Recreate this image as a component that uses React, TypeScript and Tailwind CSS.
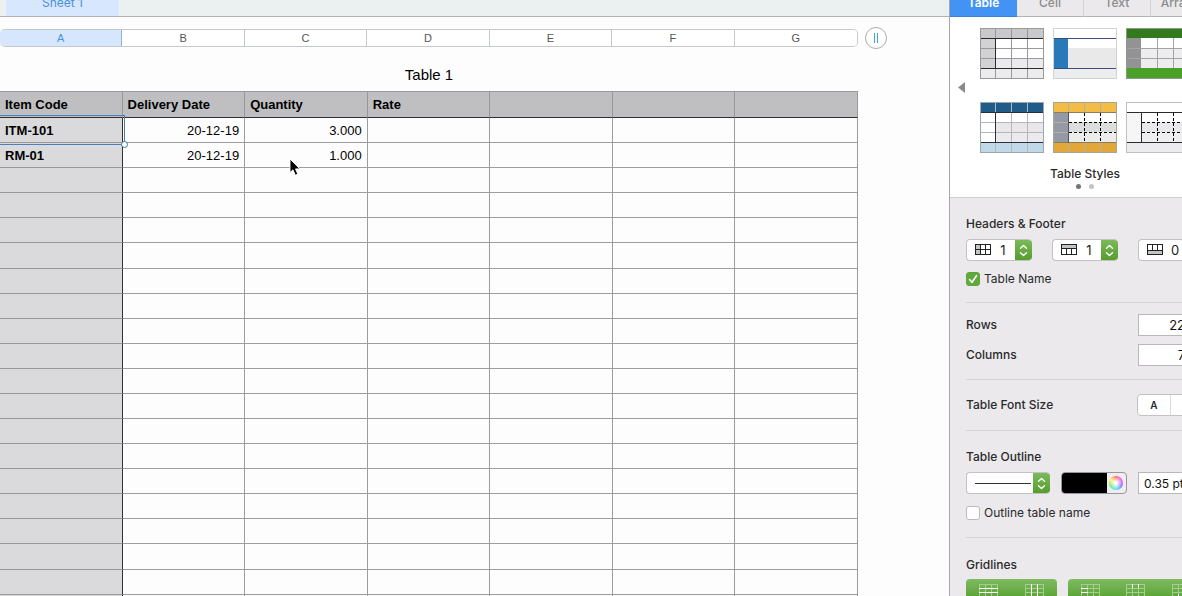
import type { ReactNode } from "react";

const columns = ["A", "B", "C", "D", "E", "F", "G"];
const headers = ["Item Code", "Delivery Date", "Quantity", "Rate", "", "", ""];
const tabs = ["Table", "Cell", "Text", "Arrange"];

const data = [
  ["ITM-101", "20-12-19", "3.000"],
  ["RM-01", "20-12-19", "1.000"],
];

const rows = Array.from({ length: 21 }, (_, i) => headers.map((_, c) => data[i]?.[c] ?? ""));

type ThumbProps = {
  name: string;
  head: string;
  side: string;
  foot: string;
  bands: string[];
  grid?: string;
  rule?: string;
  sideRule?: string;
  border: string;
  dashed?: boolean;
  plain?: boolean;
};

const styles: ThumbProps[] = [
  { name: "Gray", head: "#c9c9cb", side: "#d2d2d4", foot: "#ececee", bands: ["#ffffff", "#ffffff", "#ebebed"], grid: "#98989b", rule: "#2b2b2e", sideRule: "#2b2b2e", border: "#98989b" },
  { name: "Blue side", head: "#ffffff", side: "#2978b8", foot: "#ecedee", bands: ["#ffffff", "#e9e9ea", "#e9e9ea"], rule: "#3e4d80", border: "#d0d2d4", plain: true },
  { name: "Green", head: "#33791d", side: "#939395", foot: "#4aa029", bands: ["#ffffff", "#ededef", "#ededef"], grid: "#a3a3a6", border: "#8d9a8a", plain: true },
  { name: "Navy", head: "#205c8a", side: "#ffffff", foot: "#bfd9ea", bands: ["#ffffff", "#e9e7e9", "#eceaec"], grid: "#b4b8bc", rule: "#2b2f36", sideRule: "#2b2f36", border: "#9aa7b0" },
  { name: "Amber", head: "#f3bd45", side: "#9499a6", foot: "#e0a83b", bands: ["#ffffff", "#dcdedd", "#ececec"], grid: "#b7b19f", rule: "#8a7c5c", sideRule: "#55555a", border: "#a9a596", dashed: true },
  { name: "Outline", head: "#ffffff", side: "#f6f6f7", foot: "#ececee", bands: ["#ffffff", "#e9e9eb", "#efeff1"], rule: "#2b2b2e", sideRule: "#2b2b2e", border: "#c0c0c3", dashed: true, plain: true },
];

function StyleThumb({ name, head, side, foot, bands, grid, rule, sideRule, border, dashed, plain }: ThumbProps) {
  return (
    <button type="button" aria-label={name} className="h-[51px] w-16">
      <svg width="64" height="51" viewBox="0 0 64 51" shapeRendering="crispEdges">
        <rect width="64" height="10" fill={head} />
        {bands.map((b, i) => (
          <rect key={i} y={10 + i * 10} width="64" height="10" fill={b} />
        ))}
        <rect y="10" width="15" height="31" fill={side} />
        <rect y="40" width="64" height="11" fill={foot} />
        {grid && !dashed && (
          <path
            d={plain ? "M0 20.5H64M0 30.5H64M31.5 10V40M47.5 10V40" : "M0 20.5H64M0 30.5H64M15.5 0V51M31.5 0V51M47.5 0V51"}
            stroke={grid}
          />
        )}
        {grid && dashed && <path d="M0 20.5H15M0 30.5H15M15.5 0V10M31.5 0V10M47.5 0V10M15.5 41V51M31.5 41V51M47.5 41V51" stroke={grid} />}
        {dashed && <path d="M16 20.5H64M16 30.5H64M31.5 11V40M47.5 11V40" stroke="#000" strokeDasharray="3 2" />}
        {rule && <path d="M1 10.5H63M1 40.5H63" stroke={rule} />}
        {sideRule && <path d="M15.5 10V41" stroke={sideRule} />}
        <rect x=".5" y=".5" width="63" height="50" fill="none" stroke={border} />
      </svg>
    </button>
  );
}

function Chevrons() {
  return (
    <span className="flex w-[17px] shrink-0 items-center justify-center bg-linear-to-b from-[#7cb95a] to-[#559d2c]">
      <svg width="9" height="13" viewBox="0 0 9 13" fill="none" stroke="#fff" strokeWidth="1.4" strokeLinecap="round" strokeLinejoin="round">
        <path d="M1.5 4.2 4.5 1.5 7.5 4.2M1.5 8.8 4.5 11.5 7.5 8.8" />
      </svg>
    </span>
  );
}

function CountSelect({ label, value, children }: { label: string; value: string; children: ReactNode }) {
  return (
    <label className="flex h-[22px] w-[66px] overflow-hidden rounded border border-r-0 border-[#c3c1c4] bg-white">
      <span className="sr-only">{label}</span>
      <svg width="16" height="20" viewBox="0 -4 16 20" className="ml-2 shrink-0" shapeRendering="crispEdges">
        {children}
      </svg>
      <select defaultValue={value} className="min-w-0 flex-1 appearance-none bg-transparent text-center text-[13px] leading-5 text-[#222] outline-none">
        <option>0</option>
        <option>1</option>
        <option>2</option>
      </select>
      <Chevrons />
    </label>
  );
}

function CheckBox({ label, checked }: { label: string; checked?: boolean }) {
  return (
    <label className="flex h-[14px] items-center gap-1 text-[12px] text-[#2a2a2c]">
      <span className="grid">
        <input
          type="checkbox"
          defaultChecked={checked}
          className="peer col-start-1 row-start-1 size-[14px] appearance-none rounded-[3px] border border-[#bdbbbe] bg-white checked:border-[#5fa53a] checked:bg-[#62a93d]"
        />
        <svg viewBox="0 0 14 14" className="pointer-events-none invisible col-start-1 row-start-1 size-[14px] peer-checked:visible" fill="none" stroke="#fff" strokeWidth="1.6" strokeLinecap="round" strokeLinejoin="round">
          <path d="M3.5 7.5 6 10.3 10.5 3.7" />
        </svg>
      </span>
      {label}
    </label>
  );
}

// 19x14 grid glyph, strong lines drawn over a faint lattice
function GridButton({ label, strong }: { label: string; strong: string }) {
  return (
    <button type="button" aria-label={label} className="flex w-[46px] justify-center pt-[5px]">
      <svg width="19" height="14" viewBox="0 0 19 14" fill="none" shapeRendering="crispEdges">
        <path d="M.5.5H18.5V13.5H.5ZM.5 4.5H18.5M.5 8.5H18.5M6.5 .5V13.5M12.5 .5V13.5" stroke="#a5cd8b" />
        <path d={strong} stroke="#fff" />
      </svg>
    </button>
  );
}

function Inspector() {
  return (
    <aside className="w-[233px] shrink-0 overflow-hidden border-l border-[#a5a5aa] bg-[#ebe9eb] font-['Inter',sans-serif] text-[#2a2a2c]">
      <div className="w-[270px]">
        <nav className="grid h-[17px] w-[268px] grid-cols-4 overflow-hidden text-[12px] font-medium">
          {tabs.map((t, i) => (
            <button
              key={t}
              type="button"
              className={
                i === 0
                  ? "flex h-[17px] items-center justify-center border-b border-[#3b7fd0] bg-[#4293f3] pb-[11px] font-semibold text-white"
                  : "flex h-[17px] items-center justify-center border-r border-b border-r-[#d4d2d4] border-b-[#b4b2b5] bg-[#ebe9eb] pb-[11px] text-[#8b8b8e]"
              }
            >
              {t}
            </button>
          ))}
        </nav>

        <section className="border-b border-[#cfcdd0] bg-white pt-[11px] pb-2">
          <div className="flex gap-[15px] pl-2">
            <button type="button" aria-label="Previous styles" className="pb-1.5">
              <svg width="7" height="11" viewBox="0 0 7 11">
                <path d="M7 0V11L0 5.5Z" fill="#8a8a8e" />
              </svg>
            </button>
            <div className="grid grid-cols-3 gap-x-[9px] gap-y-[23px]">
              {styles.map((s) => (
                <StyleThumb key={s.name} {...s} />
              ))}
            </div>
          </div>
          <h2 className="mt-[13px] text-center text-[12px] leading-4 font-medium">Table Styles</h2>
          <div className="mt-0.5 flex justify-center gap-2">
            <span className="size-[5px] rounded-full bg-[#737376]" />
            <span className="size-[5px] rounded-full bg-[#c4c4c7]" />
          </div>
        </section>

        <div className="pl-4 text-[12px]">
          <section className="border-b border-[#d6d4d6] pt-[18px] pb-4">
            <h3 className="leading-4 font-medium">Headers &amp; Footer</h3>
            <div className="mt-[7px] mb-[11px] flex gap-5">
              <CountSelect label="Header columns" value="1">
                <rect width="6" height="11" fill="#c4c4c6" />
                <path d="M.5.5H15.5V10.5H.5ZM.5 5.5H15.5M5.5 .5V10.5M10.5 .5V10.5" fill="none" stroke="#222" />
              </CountSelect>
              <CountSelect label="Header rows" value="1">
                <rect width="16" height="5" fill="#c4c4c6" />
                <path d="M.5.5H15.5V10.5H.5ZM.5 4.5H15.5M5.5 4.5V10.5M10.5 4.5V10.5" fill="none" stroke="#222" />
              </CountSelect>
              <CountSelect label="Footer rows" value="0">
                <rect y="6" width="16" height="5" fill="#c4c4c6" />
                <path d="M.5.5H15.5V10.5H.5ZM.5 6.5H15.5M5.5 .5V6.5M10.5 .5V6.5" fill="none" stroke="#222" />
              </CountSelect>
            </div>
            <CheckBox label="Table Name" checked />
          </section>

          <section className="flex flex-col gap-2 border-b border-[#d6d4d6] pt-[11px] pb-[13px]">
            <label className="flex items-center font-medium">
              <span className="w-[172px]">Rows</span>
              <input defaultValue="22" className="h-[22px] w-[50px] border border-[#b9b7ba] bg-white pr-0.5 text-right text-[13px] font-normal text-[#111]" />
            </label>
            <label className="flex items-center font-medium">
              <span className="w-[172px]">Columns</span>
              <input defaultValue="7" className="h-[22px] w-[50px] border border-[#b9b7ba] bg-white pr-0.5 text-right text-[13px] font-normal text-[#111]" />
            </label>
          </section>

          <section className="flex items-center border-b border-[#d6d4d6] py-[14px]">
            <h3 className="w-[171px] font-medium">Table Font Size</h3>
            <div className="flex h-[22px] overflow-hidden rounded border border-[#c3c1c4] bg-white font-semibold">
              <button type="button" aria-label="Smaller" className="w-[33px] border-r border-[#dddbde] text-[10px]">A</button>
              <button type="button" aria-label="Larger" className="w-[33px] text-[14px]">A</button>
            </div>
          </section>

          <section className="border-b border-[#d6d4d6] pt-[18px] pb-[17px]">
            <h3 className="leading-4 font-medium">Table Outline</h3>
            <div className="mt-[7px] mb-3 flex gap-[11px]">
              <label className="flex h-[22px] w-[84px] overflow-hidden rounded border border-r-0 border-[#c3c1c4] bg-white">
                <span className="sr-only">Line style</span>
                <select className="w-2 appearance-none bg-transparent text-[0px] outline-none">
                  <option aria-label="Solid line" />
                </select>
                <svg height="20" viewBox="0 0 56 20" className="mr-0.5 w-14" shapeRendering="crispEdges">
                  <path d="M0 10.5H56" stroke="#333" />
                </svg>
                <Chevrons />
              </label>
              <button type="button" aria-label="Outline colour" className="flex h-[22px] w-[66px] items-center overflow-hidden rounded border border-[#98969a] bg-[#efedef]">
                <span className="h-full w-[45px] bg-black" />
                <span className="ml-[2px] size-[14px] rounded-full bg-[radial-gradient(circle,white_10%,transparent_75%),conic-gradient(#f55,#e4e,#66f,#4df,#5e6,#fe4,#f55)]" />
              </button>
              <input aria-label="Outline width" defaultValue="0.35 pt" className="h-[22px] w-[60px] border border-[#b9b7ba] bg-white pl-[5px] text-[12px] text-[#111]" />
            </div>
            <CheckBox label="Outline table name" />
          </section>

          <section className="pt-[19px]">
            <h3 className="leading-4 font-medium">Gridlines</h3>
            <div className="mt-[6px] flex gap-[11px]">
              <div className="flex h-[22px] w-[91px] rounded bg-linear-to-b from-[#7fba62] to-[#52a028]">
                <GridButton label="Horizontal body lines" strong="M0 4.5H19M0 8.5H19" />
                <GridButton label="Vertical body lines" strong="M6.5 0V14M12.5 0V14" />
              </div>
              <div className="flex h-[22px] w-[136px] rounded bg-linear-to-b from-[#7fba62] to-[#52a028]">
                <GridButton label="Header column lines" strong="M0 4.5H7M0 8.5H7" />
                <GridButton label="Header row lines" strong="M6.5 0V4M12.5 0V4" />
                <GridButton label="Footer lines" strong="M6.5 10V14M12.5 10V14" />
              </div>
            </div>
          </section>
        </div>
      </div>
    </aside>
  );
}

function cellClass(c: number) {
  if (c === 0) return "relative border-r border-b border-r-[#303033] border-b-[#98989b] bg-[#dadadc] px-[5px] pt-0.5 text-left font-bold";
  return "border-r border-b border-[#9d9da0] px-[5px] pt-0.5 text-right";
}

export default function App() {
  return (
    <div className="relative flex h-screen overflow-hidden bg-[#fefdfe] font-['Liberation_Sans',Arial,sans-serif] text-[13px] text-black">
      <main className="min-w-0 flex-1 overflow-hidden">
        <div className="flex h-[17px] overflow-hidden border-b border-[#b0b3b6] bg-[#ebf0f1] pl-1.5 font-['Inter',sans-serif]">
          <button type="button" className="flex h-4 w-[113px] items-center justify-center bg-[#d6e7fe] pb-[10px] text-[12px] text-[#4b92dc]">
            Sheet 1
          </button>
        </div>

        <div className="flex items-center gap-[7px] pt-[10px] pr-[62px]">
          <div className="grid h-[18px] flex-1 grid-cols-7 overflow-hidden rounded-[5px] border border-l-0 border-[#c3c9cd] text-center text-[11px] leading-4 text-[#555]">
            {columns.map((c, i) => (
              <button
                key={c}
                type="button"
                className={
                  i === 0
                    ? "border-r border-[#8db4d4] bg-[#d6e7fd] text-[#4b92dc]"
                    : "border-r border-[#c3c9cd] bg-white last:border-r-0"
                }
              >
                {c}
              </button>
            ))}
          </div>
          <button type="button" aria-label="Add column" className="flex size-[22px] items-center justify-center gap-0.5 rounded-full border border-[#a9adb1] bg-white">
            <span className="h-[10px] w-px bg-[#3fa6cc]" />
            <span className="h-[10px] w-px bg-[#3fa6cc]" />
          </button>
        </div>

        <div className="pr-[91px]">
          <table className="w-full table-fixed border-separate border-spacing-0">
            <caption className="h-[42px] pt-4 text-[15px] leading-5">Table 1</caption>
            <thead>
              <tr className="h-[27px]">
                {headers.map((h, i) => (
                  <th key={i} scope="col" className="border-t border-r border-b border-t-[#98989b] border-r-[#98989b] border-b-[#303033] bg-[#bfbfc1] px-[5px] text-left font-bold">
                    {h}
                  </th>
                ))}
              </tr>
            </thead>
            <tbody>
              {rows.map((row, r) => (
                <tr key={r} className={r % 12 === 5 ? "h-[26px]" : "h-[25px]"}>
                  {row.map((v, c) => (
                    <td key={c} className={cellClass(c)}>
                      {v}
                      {r === 0 && c === 0 && (
                        <span className="absolute -top-[3px] -right-[3px] -bottom-[3px] left-0 z-10 border border-l-0 border-[#4a80b8]">
                          <span className="absolute -right-1 -bottom-1 size-[7px] rounded-full border border-[#3a75b0] bg-white" />
                        </span>
                      )}
                    </td>
                  ))}
                </tr>
              ))}
            </tbody>
          </table>
        </div>
      </main>

      <Inspector />

      <svg width="12" height="19" viewBox="0 0 12 19" className="pointer-events-none absolute top-[158px] left-[289px]">
        <path d="M1 1V14.5L4 11.8 6.3 17.2 8.8 16.1 6.5 10.9H10.8Z" fill="#000" stroke="#fff" strokeWidth=".9" />
      </svg>
    </div>
  );
}
